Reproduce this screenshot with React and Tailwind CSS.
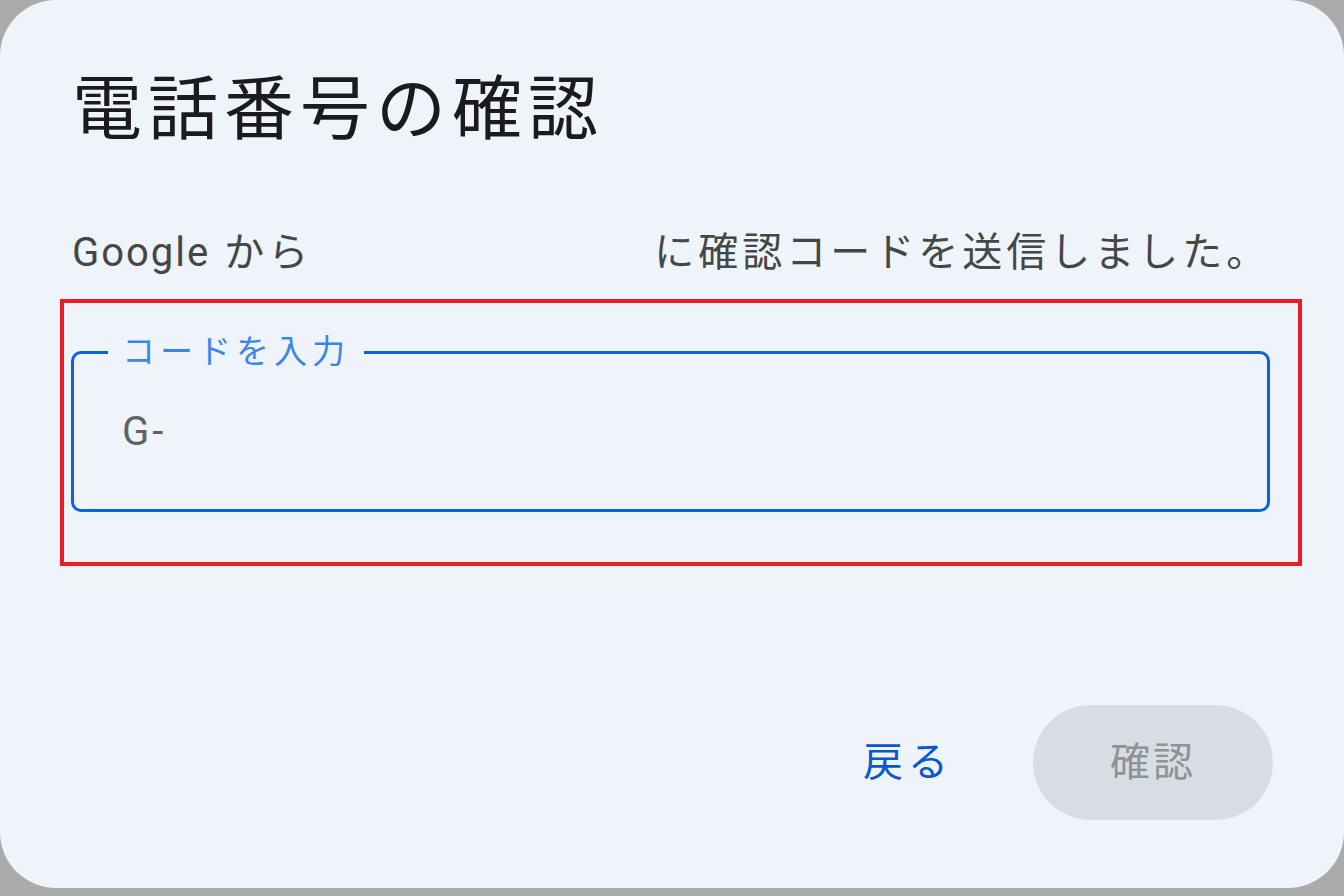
import React, { useState } from "react";

// Phone verification dialog
export default function App() {
  const [code, setCode] = useState("G-");

  return (
    <div
      className="h-[896px] w-[1344px] bg-[#aaaaaa] overflow-hidden"
      style={{ fontFamily: 'Roboto, "Noto Sans CJK JP", sans-serif' }}
    >
      <div className="h-[888px] w-[1344px] rounded-[56px] bg-[#eff4fb] pl-[72px] pr-[74px] flex flex-col">
        {/* Title */}
        <h1 className="mt-[66px] text-[70px] leading-[88px] tracking-[6px] text-[#1b1b1b] font-normal whitespace-nowrap">
          電話番号の確認
        </h1>

        {/* Description, phone number hidden */}
        <p className="mt-[75px] text-[40px] leading-[48px] tracking-[4px] text-[#444746] whitespace-nowrap">
          <span className="tracking-[2px]">Google</span>
          <span> から</span>
          <span className="inline-block w-[342px]"></span>
          <span>に確認コードを送信しました。</span>
        </p>

        {/* Highlighted code field */}
        <div className="mt-[22px] -ml-[12px] -mr-[32px] border-4 border-[#ed1c24] pl-[7px] pr-[28px] pt-[29px] pb-[50px]">
          <fieldset className="h-[180px] rounded-[10px] border-[3px] border-[#0b63de]">
            <legend className="ml-[34px] px-[14px] text-[33px] leading-[40px] tracking-[5px] text-[#3b86e8]">
              コードを入力
            </legend>
            <input
              value={code}
              onChange={(e) => setCode(e.target.value)}
              className="mt-[36px] pl-[48px] w-full bg-transparent outline-none text-[40px] leading-[48px] tracking-[3px] text-[#5f6368]"
              style={{ fontFamily: 'Roboto, "Noto Sans CJK JP", sans-serif' }}
            />
          </fieldset>
        </div>

        {/* Actions */}
        <div className="mt-auto mb-[68px] -mr-[3px] flex items-center justify-end gap-[80px]">
          <button className="text-[40px] leading-[48px] tracking-[5px] text-[#0b57d0]">
            戻る
          </button>
          <button
            disabled
            className="h-[115px] w-[240px] rounded-full bg-[#d8dce3] text-[40px] leading-[48px] tracking-[3px] text-[#8f9296]"
          >
            確認
          </button>
        </div>
      </div>
    </div>
  );
}
